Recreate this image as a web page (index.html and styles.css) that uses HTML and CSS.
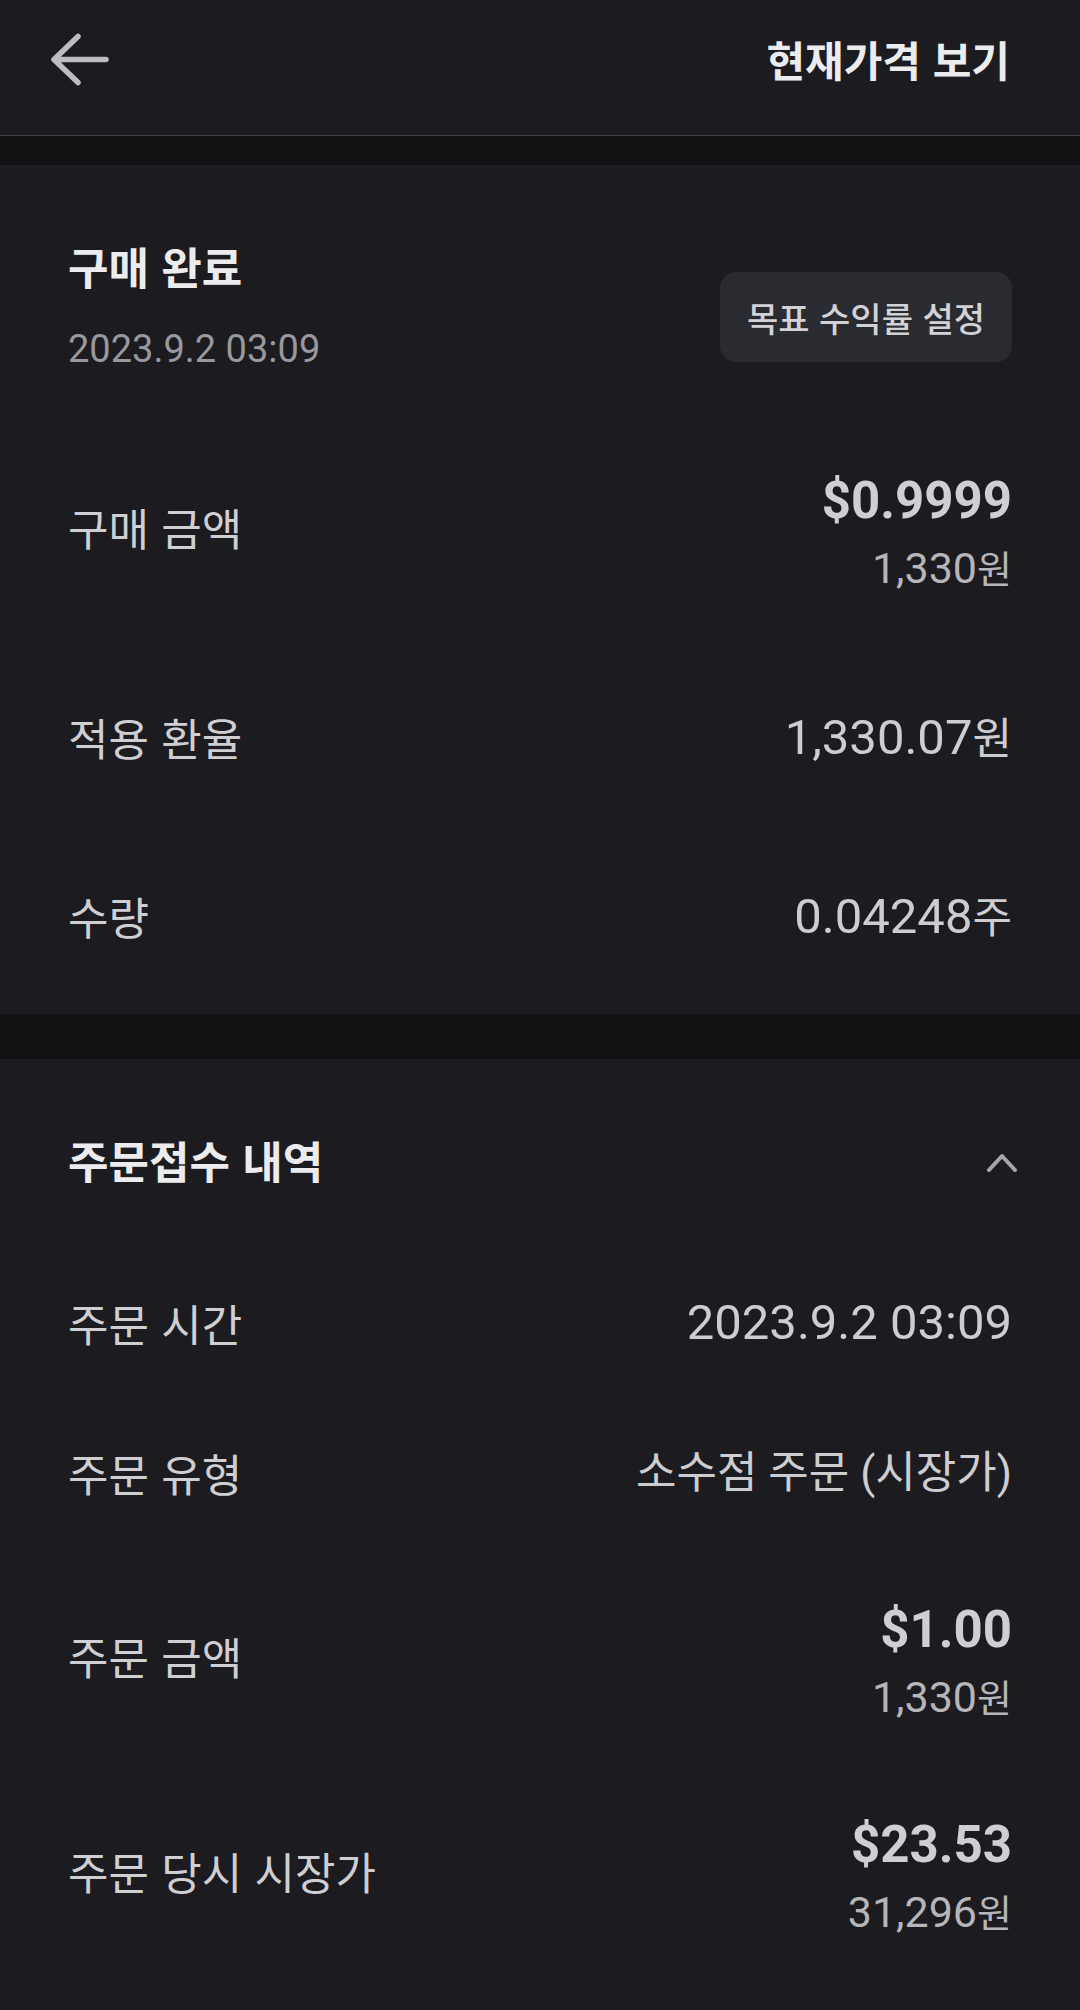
FILE: index.html
```html
<!DOCTYPE html>
<html lang="ko">
<head>
<meta charset="utf-8">
<title>구매 완료</title>
<link rel="stylesheet" href="styles.css">
</head>
<body>
<div class="app">
  <header class="topbar">
    <button class="back" aria-label="뒤로">
      <svg width="60" height="56" viewBox="0 0 60 56"><path d="M28 5.5 L4 28.5 L28 51.5 M4 28.5 H56" fill="none" stroke="#bdbdc1" stroke-width="5.5" stroke-linecap="round" stroke-linejoin="round"/></svg>
    </button>
    <span class="topbar-link">현재가격 보기</span>
  </header>
  <div class="divider divider-sm"></div>

  <section class="card card-summary">
    <div class="summary-head">
      <div class="summary-text">
        <h1 class="title">구매 완료</h1>
        <div class="date">2023.9.2 03:09</div>
      </div>
      <button class="goal-btn">목표 수익률 설정</button>
    </div>
    <div class="row row-2">
      <div class="label">구매 금액</div>
      <div class="value">
        <div class="main">$0.9999</div>
        <div class="sub">1,330<span class="u">원</span></div>
      </div>
    </div>
    <div class="row">
      <div class="label">적용 환율</div>
      <div class="value">1,330.07<span class="u">원</span></div>
    </div>
    <div class="row">
      <div class="label">수량</div>
      <div class="value">0.04248<span class="u">주</span></div>
    </div>
  </section>

  <div class="divider divider-lg"></div>

  <section class="card card-order">
    <div class="section-head">
      <h2 class="title">주문접수 내역</h2>
      <svg class="chevron" width="36" height="24" viewBox="0 0 36 24"><path d="M7 22 L20 8 L33 22" fill="none" stroke="#a3a6ab" stroke-width="4" stroke-linecap="round" stroke-linejoin="round"/></svg>
    </div>
    <div class="row">
      <div class="label">주문 시간</div>
      <div class="value">2023.9.2 03:09</div>
    </div>
    <div class="row">
      <div class="label">주문 유형</div>
      <div class="value kr">소수점 주문 (시장가)</div>
    </div>
    <div class="row row-2">
      <div class="label">주문 금액</div>
      <div class="value">
        <div class="main">$1.00</div>
        <div class="sub">1,330<span class="u">원</span></div>
      </div>
    </div>
    <div class="row row-2">
      <div class="label">주문 당시 시장가</div>
      <div class="value">
        <div class="main">$23.53</div>
        <div class="sub">31,296<span class="u">원</span></div>
      </div>
    </div>
  </section>
</div>
</body>
</html>
```

FILE: styles.css
```css
html, body {
  margin: 0;
  padding: 0;
  background: #1b1b20;
}

body {
  font-family: "Noto Sans CJK KR", "Noto Sans", sans-serif;
  color: #cfcfd3;
}

.app {
  width: 1080px;
}

.topbar {
  height: 136px;
  box-sizing: border-box;
  border-bottom: 1px solid #3c3c41;
  display: flex;
  align-items: center;
  justify-content: space-between;
  padding: 0 70px 18px 50px;
}

.back {
  background: none;
  border: none;
  padding: 0;
  margin: 0;
  display: flex;
}

.topbar-link {
  font-size: 42px;
  font-weight: 700;
  line-height: 56px;
  color: #ececee;
}

.divider {
  background: #111113;
}

.divider-sm {
  height: 29px;
}

.divider-lg {
  height: 45px;
}

.card {
  background: #1b1b20;
}

.card-summary {
  padding: 73px 0 9px;
}

.summary-head {
  display: flex;
  justify-content: space-between;
  align-items: flex-end;
  padding: 0 68px;
  margin-bottom: 32px;
}

.title {
  margin: 0;
  font-size: 44px;
  font-weight: 700;
  line-height: 56px;
  color: #ececee;
}

.date {
  margin-top: 30px;
  font-family: Roboto, "Noto Sans CJK KR", sans-serif;
  font-size: 38px;
  line-height: 50px;
  color: #98989d;
}

.goal-btn {
  width: 292px;
  height: 90px;
  margin-bottom: 12px;
  border: none;
  border-radius: 16px;
  background: #2a2b31;
  color: #d2d2d6;
  font-family: "Noto Sans CJK KR", sans-serif;
  font-size: 34px;
  font-weight: 500;
  padding: 0;
}

.row {
  display: flex;
  justify-content: space-between;
  align-items: center;
  padding: 58px 68px;
}

.row.row-2 {
  padding: 54px 68px 53px;
}

.card-order .row {
  padding: 45px 68px;
}

.card-order .row.row-2 {
  padding: 41px 68px 40px;
}

.label {
  font-size: 44px;
  line-height: 60px;
  color: #cfcfd3;
}

.value {
  font-family: Roboto, "Noto Sans CJK KR", sans-serif;
  font-size: 49px;
  line-height: 60px;
  color: #cdcdd1;
  text-align: right;
}

.value.kr {
  font-size: 44px;
}

.value .u {
  font-family: "Noto Sans CJK KR", sans-serif;
  font-size: 43px;
}

.main {
  padding-top: 12px;
  font-size: 51px;
  font-weight: 700;
  line-height: 58px;
  color: #cfcfd3;
}

.sub {
  margin-top: 11px;
  font-size: 43px;
  line-height: 52px;
  color: #b5b5ba;
}

.sub .u {
  font-size: 38px;
}

.section-head {
  display: flex;
  justify-content: space-between;
  align-items: center;
  padding: 73px 68px 60px;
}

.chevron {
  margin-right: -6px;
}
```
